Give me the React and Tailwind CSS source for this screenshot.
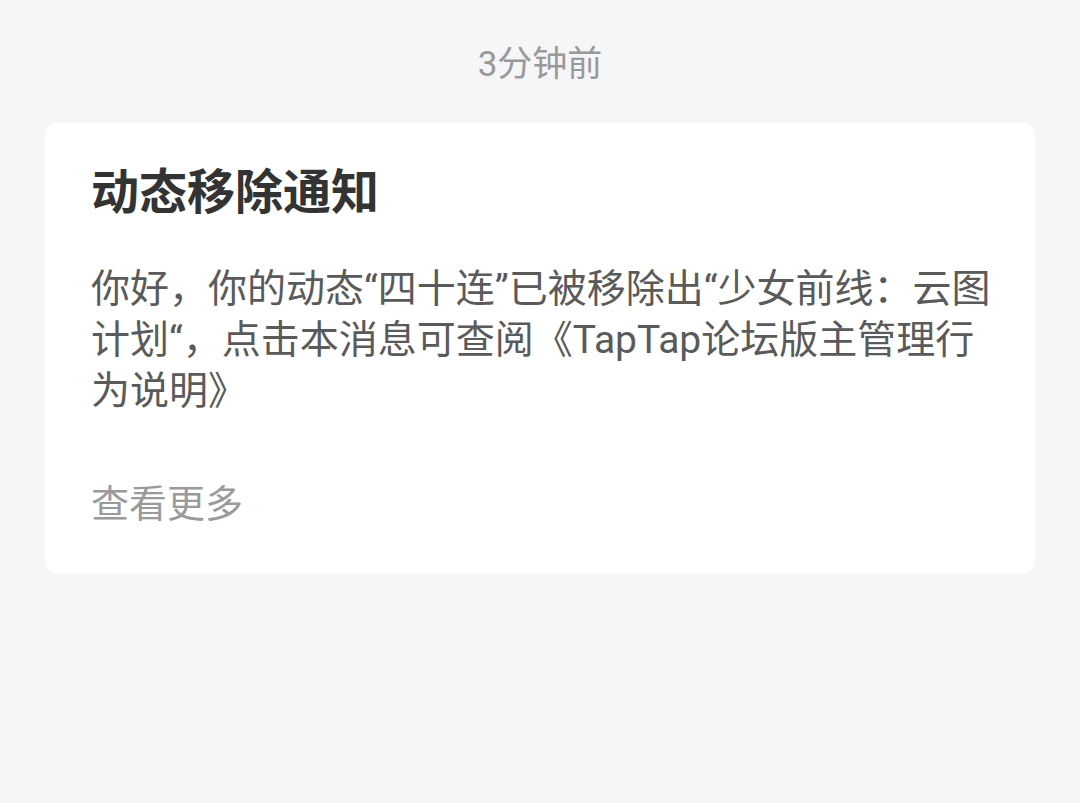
import React from "react";

const font = {
  fontFamily: '"Roboto", "Noto Sans CJK SC", sans-serif',
};

export default function App() {
  return (
    <div className="min-h-screen w-full bg-[#f5f6f8] px-[45px] pt-[41px]" style={font}>
      {/* Timestamp */}
      <div className="text-center text-[35px] leading-[48px] text-[#999999]">3分钟前</div>

      {/* Notice card */}
      <div className="mt-[34px] rounded-[12px] bg-white pl-[46px] pr-[40px] pt-[46px] pb-[44px]">
        <h1 className="text-[48px] font-bold leading-[48px] text-[#333333]">动态移除通知</h1>
        <p className="mt-[47px] text-[39px] leading-[51px] text-[#5a5a5a]">
          你好，你的动态“四十连”已被移除出“少女前线：云图计划“，点击本消息可查阅《TapTap论坛版主管理行为说明》
        </p>
        <div className="mt-[62px] text-[38px] leading-[51px] text-[#9a9a9a]">查看更多</div>
      </div>
    </div>
  );
}
